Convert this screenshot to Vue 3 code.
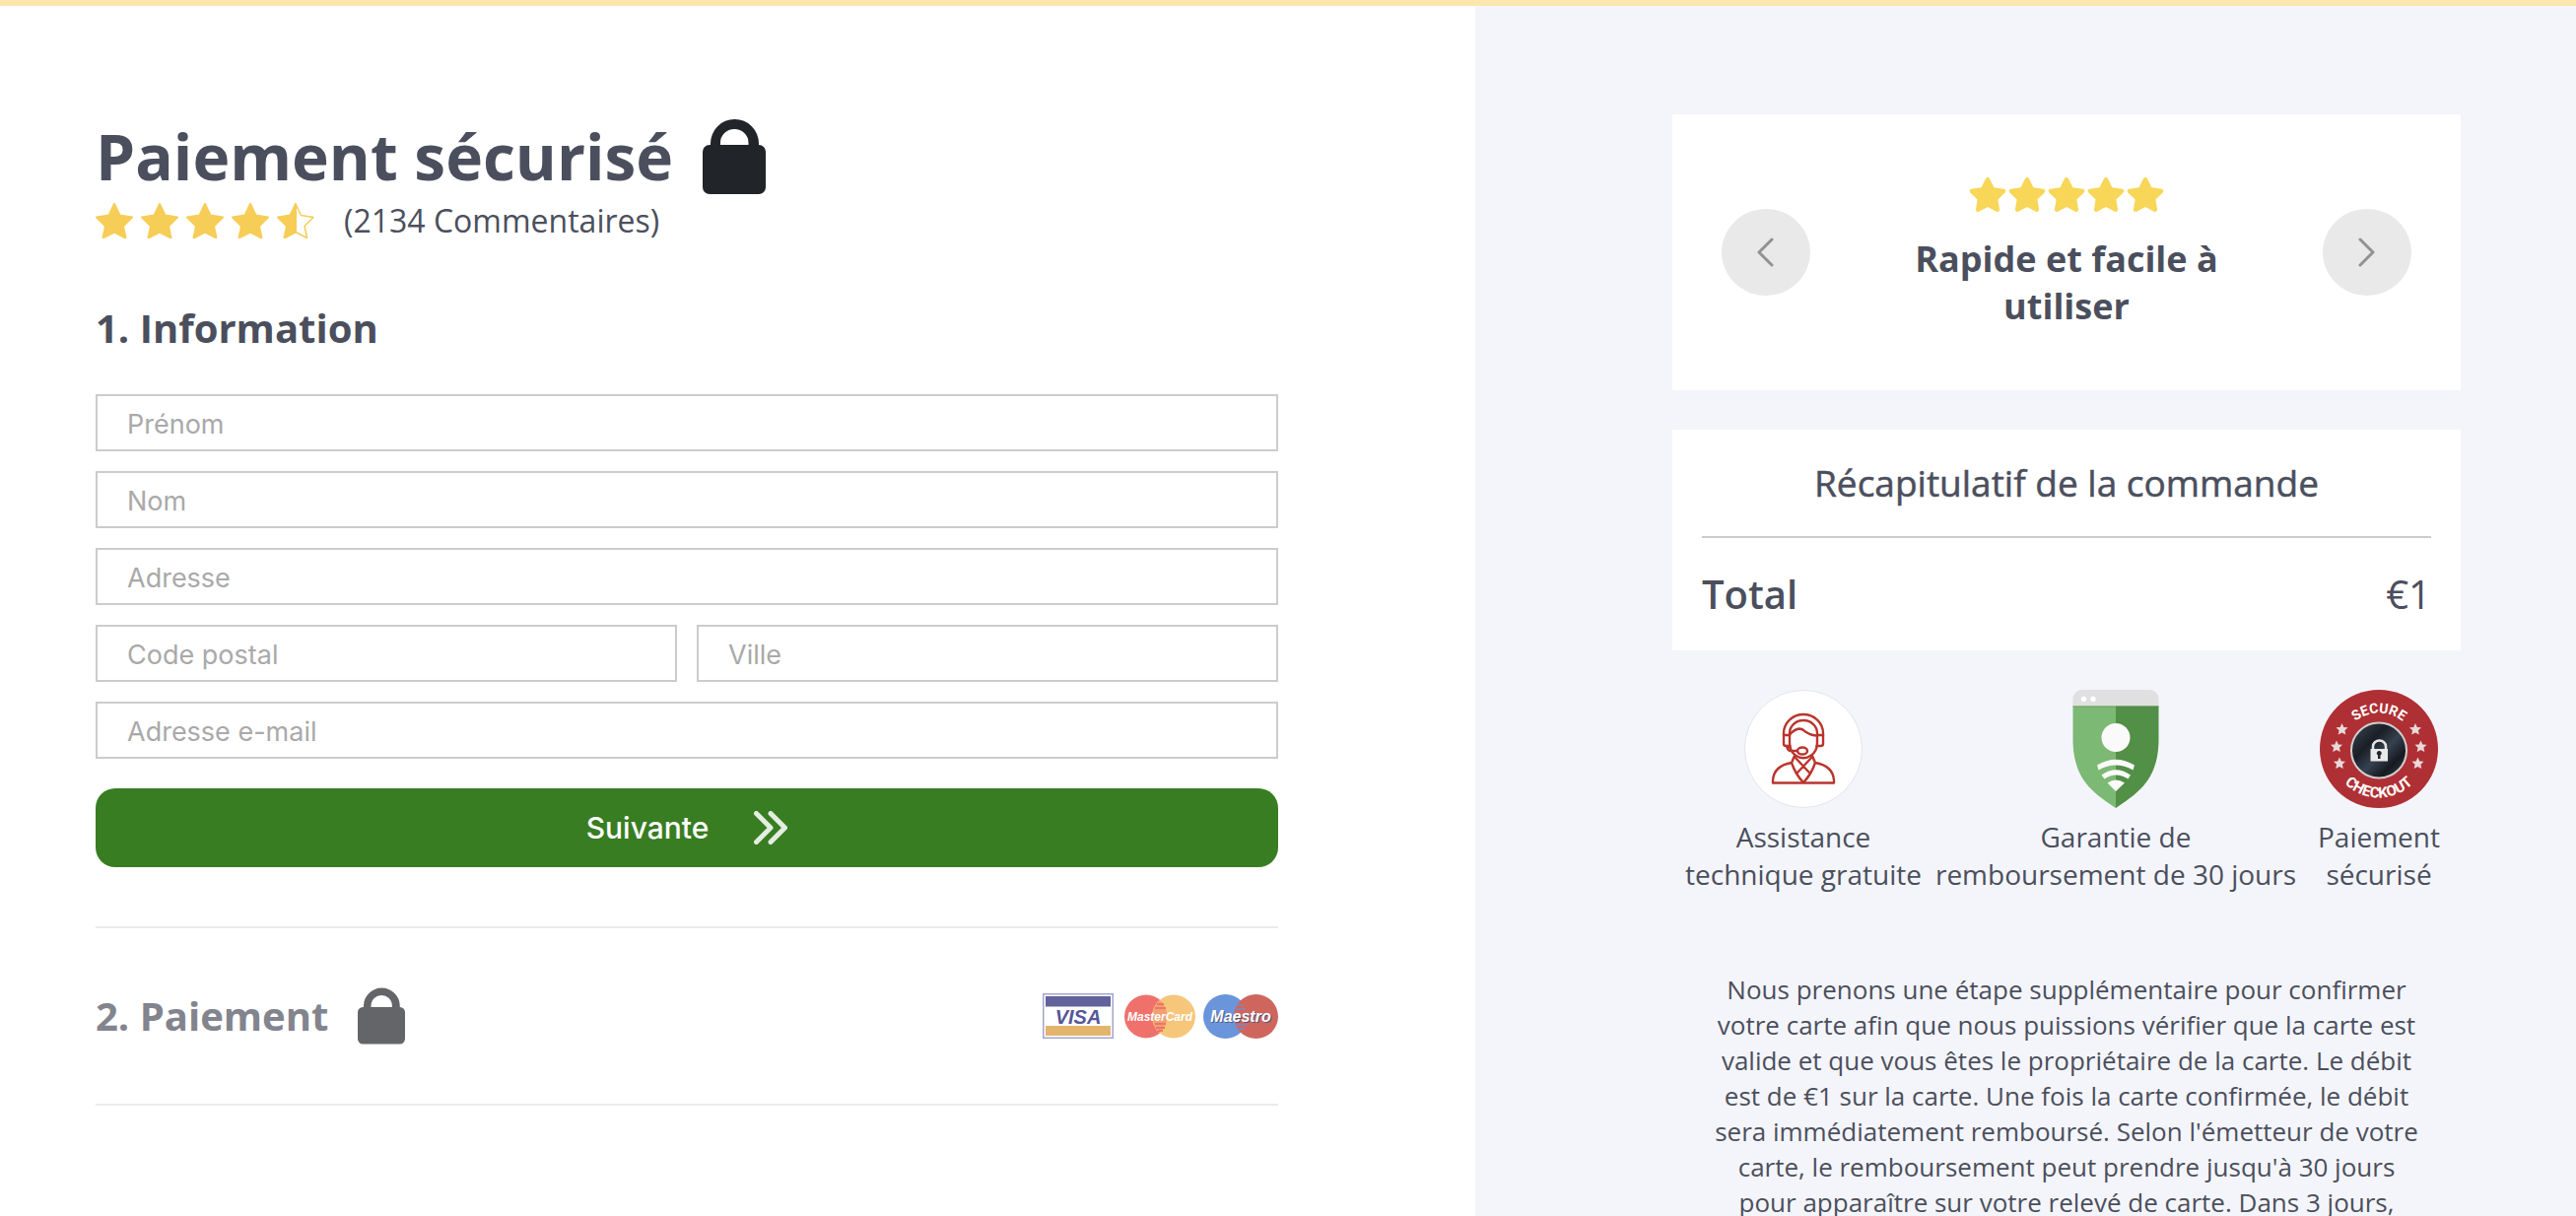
<script setup>
import { ref } from 'vue'

const starSolid =
  'M259.3 17.8L194 150.2 47.9 171.5c-26.2 3.8-36.7 36.1-17.7 54.6l105.7 103-25 145.5c-4.5 26.3 23.2 46 46.4 33.7L288 439.6l130.7 68.7c23.2 12.2 50.9-7.4 46.4-33.7l-25-145.5 105.7-103c19-18.5 8.5-50.8-17.7-54.6L382 150.2 316.7 17.8c-11.7-23.6-45.6-23.9-57.4 0z'
const lockPath =
  'M8 26V24.500a24.500 24.500 0 0 1 49 0V26a7 7 0 0 1 7 7V69a7 7 0 0 1-7 7H7a7 7 0 0 1-7-7V33a7 7 0 0 1 7-7zM18 26H46.500V24a14.250 14 0 0 0-28.500 0z'
const badgeStars = [
  [22.5, 40],
  [17, 57.500],
  [20, 74.500],
  [97, 40],
  [102.500, 57.500],
  [99.500, 74.500],
]

const form = ref({ prenom: '', nom: '', adresse: '', codePostal: '', ville: '', email: '' })
</script>

<template>
  <div class="page">
    <main class="checkout">
      <header>
        <div class="title-row">
          <h1>Paiement sécurisé</h1>
          <svg class="lock" viewBox="0 0 64 76" aria-hidden="true"><path :d="lockPath" fill="#212529" fill-rule="evenodd" /></svg>
        </div>
        <div class="rating">
          <div class="rating-stars">
            <svg v-for="n in 4" :key="n" viewBox="0 0 38 36" aria-hidden="true">
              <path class="star" d="M19 1l5.500 11.500 12.500 2-9 9 2.500 12L19 29.500 7.500 35.500l2.500-12-9-9 12.500-2z" />
            </svg>
            <svg viewBox="0 0 38 36" aria-hidden="true">
              <path class="star-line" d="M19 1l5.500 11.500 12.500 2-9 9 2.500 12L19 29.500z" />
              <path class="star" d="M19 1V29.500L7.500 35.500l2.500-12-9-9 12.500-2z" />
            </svg>
          </div>
          <span>(2134 Commentaires)</span>
        </div>
      </header>

      <form class="info" @submit.prevent>
        <h2>1. Information</h2>
        <input v-model="form.prenom" type="text" placeholder="Prénom" aria-label="Prénom" />
        <input v-model="form.nom" type="text" placeholder="Nom" aria-label="Nom" />
        <input v-model="form.adresse" type="text" placeholder="Adresse" aria-label="Adresse" />
        <div class="split">
          <input v-model="form.codePostal" type="text" placeholder="Code postal" aria-label="Code postal" />
          <input v-model="form.ville" type="text" placeholder="Ville" aria-label="Ville" />
        </div>
        <input v-model="form.email" type="email" placeholder="Adresse e-mail" aria-label="Adresse e-mail" />
        <button type="submit" class="next">
          Suivante
          <svg viewBox="0 0 34 34" aria-hidden="true"><path d="M2.500 2.500L17 17 2.500 31.500M17 2.500L31.500 17 17 31.500" /></svg>
        </button>
      </form>

      <section class="payment">
        <h2>2. Paiement</h2>
        <svg class="lock-small" viewBox="0 0 64 76" aria-hidden="true"><path :d="lockPath" fill="#646569" fill-rule="evenodd" /></svg>
        <div class="cards">
          <svg width="72" height="46" viewBox="0 0 72 46" role="img" aria-label="Visa">
            <rect x=".75" y=".75" width="70.500" height="44.500" fill="#fff" stroke="#a3a4cc" stroke-width="1.500" />
            <rect x="3" y="3" width="66" height="10.500" fill="#62629c" />
            <rect x="3" y="33" width="66" height="10" fill="#e3b56c" />
            <text x="36" y="30.500" text-anchor="middle" class="logo" font-size="20" fill="#57559a">VISA</text>
          </svg>
          <svg width="75" height="46" viewBox="-2 0 75 46" role="img" aria-label="MasterCard">
            <circle cx="23" cy="23.500" r="22" fill="#f0716c" />
            <circle cx="51" cy="23.500" r="22" fill="#f6c67a" />
            <path d="M37 7a22 22 0 0 1 0 33a22 22 0 0 1 0-33z" fill="#f2a070" />
            <path d="M34 11h7M32 15h11M32 31h11M33 35h9M35 38h5" stroke="#ee7468" stroke-width="2" />
            <text x="37" y="28" text-anchor="middle" class="logo" font-size="12" fill="#fff">MasterCard</text>
          </svg>
          <svg width="76" height="46" viewBox="0 0 76 46" role="img" aria-label="Maestro">
            <circle cx="22.500" cy="23.500" r="22.500" fill="#6b95da" />
            <circle cx="53.500" cy="23.500" r="22.500" fill="#cf665e" />
            <path d="M38 8a22.500 22.500 0 0 1 0 31a22.500 22.500 0 0 1 0-31z" fill="#cf665e" />
            <path d="M35 12h6M33 16h10M32 32h12M34 36h8" stroke="#7f87c0" stroke-width="1.500" />
            <text x="38" y="28.500" text-anchor="middle" class="logo maestro" font-size="16" fill="#fff">Maestro</text>
          </svg>
        </div>
      </section>
    </main>

    <aside class="side">
      <section class="card review">
        <button type="button" class="arrow" aria-label="Précédent">
          <svg viewBox="0 0 18 30" aria-hidden="true"><path d="M15 2L2 15l13 13" /></svg>
        </button>
        <div class="review-body">
          <div class="review-stars">
            <svg v-for="n in 5" :key="n" viewBox="0 0 576 512" aria-hidden="true"><path :d="starSolid" fill="#f8d658" /></svg>
          </div>
          <p>Rapide et facile à utiliser</p>
        </div>
        <button type="button" class="arrow" aria-label="Suivant">
          <svg viewBox="0 0 18 30" aria-hidden="true"><path d="M2 2l13 13L2 28" /></svg>
        </button>
      </section>

      <section class="card summary">
        <h3>Récapitulatif de la commande</h3>
        <div class="total"><strong>Total</strong><span>€1</span></div>
      </section>

      <div class="badges">
        <figure>
          <svg viewBox="0 0 120 120" aria-hidden="true">
            <circle cx="60" cy="60" r="59.500" fill="#fff" stroke="#e3e4ea" />
            <g fill="none" stroke="#b9352d" stroke-width="2.400" stroke-linejoin="round" stroke-linecap="round">
              <path d="M40 46V44a20 19 0 0 1 40 0V46M46 46V44a14 13 0 0 1 28 0V46" />
              <path d="M46 46H40V55q0 2 3 2h3.500M74 46h6V55q0 2-3 2h-3.500" />
              <path d="M46 45.500q5-5.500 10-6 3 0 6 3 6 4 12 4M46 46v8q0 8 6 12.500 8 5.500 16 0 6-4.500 6-12.500v-8" />
              <path d="M43 57q1 5 4 5h7M43 57l4 2" />
              <ellipse cx="59" cy="62" rx="5" ry="3.500" />
              <path d="M51 67l-3 7q-18 3-19 18v2.500h62v-2.500q-1-15-19-18l-3-7M48 74q4 12 12 20 8-8 12-20M51 68L66 84M69 68L54 84" />
            </g>
          </svg>
          <figcaption>Assistance<br />technique gratuite</figcaption>
        </figure>
        <figure>
          <svg viewBox="0 0 120 120" aria-hidden="true">
            <path d="M16.500 16H60V120C38 105 16.500 92 16.500 50z" fill="#7cb974" />
            <path d="M60 16h43.500V50c0 42-21.500 55-43.500 70z" fill="#528f47" />
            <path d="M16.500 16.500V9a9 9 0 0 1 9-9h69a9 9 0 0 1 9 9v7.500z" fill="#e0e0e0" />
            <path d="M16.500 17h87" stroke="#4f8a4a" stroke-opacity=".5" />
            <g fill="#fff"><circle cx="27.500" cy="9.500" r="2.700" /><circle cx="37" cy="9.500" r="2.700" /></g>
            <circle cx="60" cy="48.500" r="14.500" fill="#fafafa" />
            <path d="M41 76.500Q60 65 79 76.500l-1.500 5Q60 71.500 42.500 81.500zM45.500 86.500Q60 76 75 86.500l-2.500 4Q60 82.500 48.500 90.500zM51.500 94.500Q60 88.500 69 94.500L60 103z" fill="#fafafa" />
          </svg>
          <figcaption>Garantie de<br />remboursement de 30 jours</figcaption>
        </figure>
        <figure>
          <svg viewBox="0 0 120 120" aria-hidden="true">
            <defs>
              <linearGradient id="disc" x1="0" y1="0" x2="1" y2="1">
                <stop offset=".1" stop-color="#323c48" /><stop offset=".35" stop-color="#1a1f26" />
                <stop offset=".55" stop-color="#364150" /><stop offset=".75" stop-color="#161a20" /><stop offset=".95" stop-color="#36404c" />
              </linearGradient>
              <path id="arc-top" d="M22 61.500a38 38 0 0 1 76 0" />
              <path id="arc-bottom" d="M11.500 61a48.500 48.500 0 0 0 97 0" />
            </defs>
            <circle cx="60" cy="60" r="60" fill="#af3034" />
            <circle cx="60" cy="61.500" r="28" fill="url(#disc)" stroke="#d0cfcf" stroke-width="2" />
            <g class="seal-text">
              <text font-size="14"><textPath href="#arc-top" startOffset="50%">SECURE</textPath></text>
              <text font-size="15"><textPath href="#arc-bottom" startOffset="50%">CHECKOUT</textPath></text>
            </g>
            <path
              v-for="([x, y], i) in badgeStars"
              :key="i"
              :transform="`translate(${x} ${y})`"
              d="M0-6l1.800 3.900 4.200.4-3.100 2.900.9 4.300L0 3.400-3.800 5.500l.9-4.300L-6-1.700l4.200-.4z"
              fill="#ead9da"
            />
            <path d="M54 61v-3.500a6.500 6 0 0 1 13 0V61" fill="none" stroke="#e6e6e6" stroke-width="2.500" />
            <rect x="51.500" y="60" width="17.500" height="12.500" fill="#e9e9e9" />
            <path d="M60.300 62a2.400 2.400 0 0 1 1.200 4.500V70H59v-3.500a2.400 2.400 0 0 1 1.300-4.500z" fill="#20252c" />
          </svg>
          <figcaption>Paiement<br />sécurisé</figcaption>
        </figure>
      </div>

      <p class="notice">
        Nous prenons une étape supplémentaire pour confirmer votre carte afin que nous puissions vérifier que la carte
        est valide et que vous êtes le propriétaire de la carte. Le débit est de €1 sur la carte. Une fois la carte
        confirmée, le débit sera immédiatement remboursé. Selon l'émetteur de votre carte, le remboursement peut prendre
        jusqu'à 30 jours pour apparaître sur votre relevé de carte. Dans 3 jours,
      </p>
    </aside>
  </div>
</template>

<style>
body {
  margin: 0;
}
</style>

<style scoped>
.page {
  display: grid;
  grid-template-columns: 1497fr 1117fr;
  box-sizing: border-box;
  height: 100vh;
  overflow: hidden;
  border-top: 6px solid #fbe7ae;
  background: #fff;
  color: #4b4f5d;
  font-family: 'Open Sans', sans-serif;
}
h1, h2, h3, p, figure {
  margin: 0;
}
svg {
  display: block;
  flex: none;
}
.checkout {
  padding: 115px 200px 0 97px;
}
.title-row {
  display: flex;
  gap: 30px;
}
h1 {
  font-size: 64px;
  line-height: 76px;
  font-weight: 700;
}
.lock {
  width: 64px;
  height: 76px;
}
.rating {
  display: flex;
  gap: 30px;
  margin-top: 9px;
  font-size: 32px;
  line-height: 36px;
}
.rating-stars {
  display: flex;
  gap: 8px;
}
.rating-stars svg {
  width: 38px;
  height: 36px;
}
.star {
  fill: #f6cd57;
  stroke: #f6cd57;
  stroke-width: 2;
  stroke-linejoin: round;
}
.star-line {
  fill: none;
  stroke: #f6cd57;
  stroke-width: 1.5;
  stroke-linejoin: round;
}
h2 {
  font-size: 40px;
  line-height: 56px;
  font-weight: 700;
}
.info {
  display: flex;
  flex-direction: column;
  gap: 20px;
  margin-top: 63px;
}
.info h2 {
  margin-bottom: 19px;
}
.split {
  display: flex;
  gap: 20px;
}
input {
  box-sizing: border-box;
  width: 100%;
  min-width: 0;
  height: 58px;
  padding: 2px 30px 0;
  border: 2px solid #ccc;
  border-radius: 0;
  background: #fff;
  color: #4b4f5d;
  font-family: Inter, sans-serif;
  font-size: 27px;
}
input::placeholder {
  color: #a9a9a9;
  opacity: 1;
}
.next {
  display: flex;
  align-items: center;
  justify-content: center;
  gap: 46px;
  height: 80px;
  margin-top: 10px;
  border: 0;
  border-radius: 20px;
  background: #387d22;
  color: #fff;
  font-family: Inter, sans-serif;
  font-size: 30px;
  font-weight: 500;
}
.next svg {
  width: 34px;
  height: 34px;
  fill: none;
  stroke: #e4ede1;
  stroke-width: 5;
  stroke-linecap: round;
  stroke-linejoin: round;
}
.payment {
  display: flex;
  align-items: center;
  gap: 30px;
  margin-top: 60px;
  padding: 60px 0;
  border: solid #ebebeb;
  border-width: 2px 0;
}
.payment h2 {
  color: #82848e;
}
.lock-small {
  width: 48px;
  height: 58px;
}
.cards {
  display: flex;
  gap: 8px;
  margin-left: auto;
}
.logo {
  font-family: 'Liberation Sans', sans-serif;
  font-style: italic;
  font-weight: 700;
}
.maestro {
  text-shadow: 1px 1px 0 #4c5a80;
}
.side {
  padding: 110px 117px 0 200px;
  background: #f4f5fa;
}
.card {
  background: #fff;
}
.review {
  display: flex;
  align-items: center;
  justify-content: space-between;
  box-sizing: border-box;
  min-height: 280px;
  padding: 60px 50px;
}
.arrow {
  display: flex;
  align-items: center;
  justify-content: center;
  width: 90px;
  height: 88px;
  padding: 0;
  border: 0;
  border-radius: 50%;
  background: #e9e9e9;
}
.arrow svg {
  width: 18px;
  height: 30px;
  fill: none;
  stroke: #929292;
  stroke-width: 3;
  stroke-linecap: round;
  stroke-linejoin: round;
}
.review-body {
  display: flex;
  flex-direction: column;
  align-items: center;
  gap: 24px;
  max-width: 340px;
  padding-top: 3px;
  text-align: center;
  font-size: 36px;
  line-height: 48px;
  font-weight: 700;
}
.review-stars {
  display: flex;
}
.review-stars svg {
  width: 40px;
  height: 35px;
}
.summary {
  margin-top: 40px;
  padding: 30px;
}
h3 {
  padding-bottom: 30px;
  border-bottom: 2px solid #ccc;
  text-align: center;
  font-size: 37px;
  line-height: 48px;
  font-weight: 400;
  -webkit-text-stroke: 0.5px currentColor;
}
.total {
  display: flex;
  justify-content: space-between;
  margin-top: 29px;
  font-size: 40px;
  line-height: 56px;
  margin-bottom: -1px;
}
.total strong {
  font-weight: 600;
}
.badges {
  display: grid;
  grid-template-columns: 252fr 382fr 152fr;
  margin: 40px 7px 0;
}
.badges figure {
  display: flex;
  flex-direction: column;
  align-items: center;
  gap: 10px;
  font-size: 28px;
  line-height: 38px;
  text-align: center;
  white-space: nowrap;
}
.badges svg {
  width: 120px;
  height: 120px;
}
.seal-text {
  fill: #fff;
  font-family: Roboto, sans-serif;
  font-weight: 700;
  text-anchor: middle;
}
.notice {
  margin-top: 80px;
  padding: 0 40px;
  text-align: center;
  font-size: 26px;
  line-height: 36px;
}
</style>
